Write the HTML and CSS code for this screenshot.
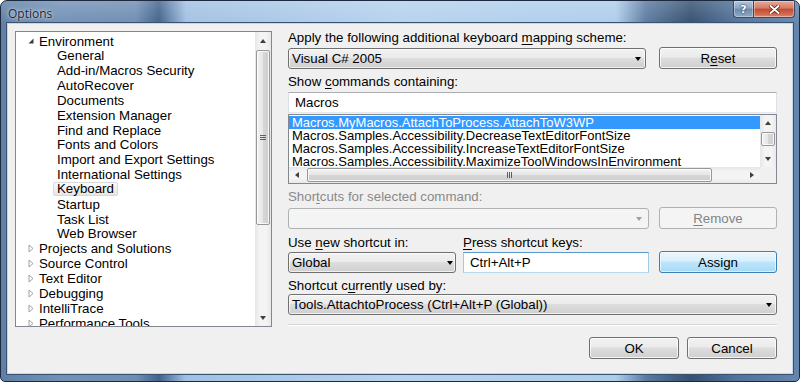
FILE: index.html
```html
<!DOCTYPE html>
<html lang="en">
<head>
    <meta charset="UTF-8">
    <meta name="viewport" content="width=device-width, initial-scale=1.0">
    <title>Options</title>
    <link rel="stylesheet" href="styles.css">
</head>
<body>
    <div class="window">
        <div class="titlebar">
            <span class="title">Options</span>
            <div class="caption">
                <span class="cap-btn help">?</span>
                <span class="cap-btn close">
                    <svg width="11" height="9" viewBox="0 0 11 9"><path d="M1.5 1 L9.5 8 M9.5 1 L1.5 8" stroke="#3a1a14" stroke-width="3.4" stroke-linecap="round"/><path d="M1.5 1 L9.5 8 M9.5 1 L1.5 8" stroke="#fff" stroke-width="2" stroke-linecap="round"/></svg>
                </span>
            </div>
        </div>

        <div class="client">
            <div class="tree">
                <div class="tree-items">
                    <div class="node root"><span class="exp"><svg width="6" height="6" viewBox="0 0 6 6"><path d="M5.5 0.5 L5.5 5.5 L0.5 5.5 Z" fill="#3c3c3c"/></svg></span>Environment</div>
                    <div class="node child">General</div>
                    <div class="node child">Add-in/Macros Security</div>
                    <div class="node child">AutoRecover</div>
                    <div class="node child">Documents</div>
                    <div class="node child">Extension Manager</div>
                    <div class="node child">Find and Replace</div>
                    <div class="node child">Fonts and Colors</div>
                    <div class="node child">Import and Export Settings</div>
                    <div class="node child">International Settings</div>
                    <div class="node child"><span class="sel">Keyboard</span></div>
                    <div class="node child">Startup</div>
                    <div class="node child">Task List</div>
                    <div class="node child">Web Browser</div>
                    <div class="node root"><span class="exp"><svg width="6" height="9" viewBox="0 0 6 9"><path d="M1 1 L5 4.5 L1 8 Z" fill="#fff" stroke="#a2a2a2"/></svg></span>Projects and Solutions</div>
                    <div class="node root"><span class="exp"><svg width="6" height="9" viewBox="0 0 6 9"><path d="M1 1 L5 4.5 L1 8 Z" fill="#fff" stroke="#a2a2a2"/></svg></span>Source Control</div>
                    <div class="node root"><span class="exp"><svg width="6" height="9" viewBox="0 0 6 9"><path d="M1 1 L5 4.5 L1 8 Z" fill="#fff" stroke="#a2a2a2"/></svg></span>Text Editor</div>
                    <div class="node root"><span class="exp"><svg width="6" height="9" viewBox="0 0 6 9"><path d="M1 1 L5 4.5 L1 8 Z" fill="#fff" stroke="#a2a2a2"/></svg></span>Debugging</div>
                    <div class="node root"><span class="exp"><svg width="6" height="9" viewBox="0 0 6 9"><path d="M1 1 L5 4.5 L1 8 Z" fill="#fff" stroke="#a2a2a2"/></svg></span>IntelliTrace</div>
                    <div class="node root"><span class="exp"><svg width="6" height="9" viewBox="0 0 6 9"><path d="M1 1 L5 4.5 L1 8 Z" fill="#fff" stroke="#a2a2a2"/></svg></span>Performance Tools</div>
                </div>
                <div class="vscroll tree-scroll">
                    <div class="sb-btn"><i class="arr up"></i></div>
                    <div class="sb-track"><div class="thumb"><i class="grip-h"></i></div></div>
                    <div class="sb-btn"><i class="arr down"></i></div>
                </div>
            </div>

            <div class="page">
                <div class="label">Apply the following additional keyboard <u>m</u>apping scheme:</div>
                <div class="row row-scheme">
                    <div class="combo"><span>Visual C# 2005</span><i class="arr drop"></i></div>
                    <div class="btn">R<u>e</u>set</div>
                </div>

                <div class="label gap">Show <u>c</u>ommands containing:</div>
                <div class="textbox search">Macros</div>

                <div class="listbox">
                    <div class="list-rows">
                        <div class="item selected">Macros.MyMacros.AttachToProcess.AttachToW3WP</div>
                        <div class="item">Macros.Samples.Accessibility.DecreaseTextEditorFontSize</div>
                        <div class="item">Macros.Samples.Accessibility.IncreaseTextEditorFontSize</div>
                        <div class="item">Macros.Samples.Accessibility.MaximizeToolWindowsInEnvironment</div>
                    </div>
                    <div class="vscroll list-scroll">
                        <div class="sb-btn"><i class="arr up"></i></div>
                        <div class="sb-track"><div class="thumb"></div></div>
                        <div class="sb-btn"><i class="arr down"></i></div>
                    </div>
                    <div class="hscroll">
                        <div class="sb-btn"><i class="arr left"></i></div>
                        <div class="sb-track"><div class="thumb"><i class="grip-v"></i></div></div>
                        <div class="sb-btn"><i class="arr right"></i></div>
                    </div>
                    <div class="corner"></div>
                </div>

                <div class="label gap disabled">Shor<u>t</u>cuts for selected command:</div>
                <div class="row row-remove">
                    <div class="combo disabled"><span></span><i class="arr drop"></i></div>
                    <div class="btn disabled"><u>R</u>emove</div>
                </div>

                <div class="grid-new">
                    <div class="label">Use <u>n</u>ew shortcut in:</div>
                    <div class="label"><u>P</u>ress shortcut keys:</div>
                    <div></div>
                    <div class="combo"><span>Global</span><i class="arr drop"></i></div>
                    <div class="textbox focused">Ctrl+Alt+P</div>
                    <div class="btn default">Assign</div>
                </div>

                <div class="label gap">Shortcut c<u>u</u>rrently used by:</div>
                <div class="combo used"><span>Tools.AttachtoProcess (Ctrl+Alt+P (Global))</span><i class="arr drop"></i></div>

                <div class="separator"></div>

                <div class="footer">
                    <div class="btn">OK</div>
                    <div class="btn">Cancel</div>
                </div>
            </div>
        </div>
    </div>
</body>
</html>
```

FILE: styles.css
```css
body {
    margin: 0;
    font-family: "Liberation Sans", Arial, sans-serif;
    font-size: 13.3px;
    color: #000;
    background: #fff;
}
u {
    text-decoration: underline;
    text-underline-offset: 2px;
}
.window {
    width: 800px;
    height: 382px;
    box-sizing: border-box;
    display: flex;
    flex-direction: column;
    border: 1px solid #1b2a3f;
    border-radius: 7px 7px 5px 5px;
    overflow: hidden;
    background:
        linear-gradient(to bottom, rgba(255, 255, 255, 0.18), rgba(255, 255, 255, 0) 24px),
        linear-gradient(90deg, #5f7fa6 0, #7291b5 60px, #6f8eb2 135px, #41628b 158px, #a2c1e2 185px, #b5d2ee 400px, #aecdeb 615px, #5b7a9f 645px, #34506f 690px, #52729a 735px, #6586ad 800px);
}
.titlebar {
    height: 23px;
    display: flex;
    align-items: flex-start;
    padding-left: 7px;
}
.title {
    margin-top: 5px;
    font-family: "Open Sans", "Noto Sans", sans-serif;
    font-size: 12px;
    line-height: 15px;
    color: #1c2430;
    text-shadow: 0 0 6px rgba(235, 244, 255, 0.9), 0 0 2px rgba(235, 244, 255, 0.8);
}
.caption {
    margin-left: auto;
    margin-right: 4px;
    display: flex;
}
.cap-btn {
    height: 17px;
    box-sizing: border-box;
    display: flex;
    align-items: center;
    justify-content: center;
    border: 1px solid #3a4c63;
    border-top: none;
    box-shadow: inset 0 0 0 1px rgba(255, 255, 255, 0.35);
}
.help {
    width: 20px;
    border-radius: 0 0 0 4px;
    border-right: none;
    background: linear-gradient(#b3c5da, #8ea6c3 45%, #7089ab 50%, #8fa9c8);
    font-family: "DejaVu Sans", sans-serif;
    font-weight: bold;
    font-size: 11px;
    color: #fff;
    text-shadow: 0 0 2px #2a3a50, 0 0 1px #2a3a50;
}
.close {
    width: 42px;
    border-radius: 0 0 4px 0;
    background: linear-gradient(#e8a898, #d57a64 45%, #c24a31 50%, #d36d53 85%, #e0907a);
}
.client {
    height: 349px;
    margin: 0 7px;
    box-sizing: border-box;
    display: flex;
    padding: 7px 15px 0 7px;
    background: #f0f0f0;
    box-shadow: 0 0 0 1px #c8d5e4, 0 0 0 2px #3b5372;
}

/* tree */
.tree {
    width: 257px;
    height: 296px;
    box-sizing: border-box;
    border: 1px solid #828790;
    background: #fff;
    display: flex;
    flex-shrink: 0;
}
.tree-items {
    flex: 1;
    padding-top: 1.6px;
    overflow: hidden;
}
.node {
    height: 14.85px;
    display: flex;
    align-items: center;
    white-space: nowrap;
}
.node.root {
    padding-left: 10px;
}
.node.child {
    padding-left: 41px;
}
.exp {
    width: 13px;
    display: flex;
    align-items: center;
    padding-left: 2px;
    box-sizing: border-box;
}
.sel {
    margin-left: -4px;
    padding: 0 3px;
    line-height: 12px;
    border: 1px solid #d9d9d9;
    border-radius: 2px;
    background: linear-gradient(#fbfbfb, #e6e6e6);
}

/* scrollbars */
.vscroll {
    width: 16px;
    display: flex;
    flex-direction: column;
    background: linear-gradient(90deg, #e6e6e6, #f4f4f4 30%, #f4f4f4 70%, #e9e9e9);
}
.hscroll {
    height: 16px;
    display: flex;
    background: linear-gradient(#e6e6e6, #f4f4f4 30%, #f4f4f4 70%, #e9e9e9);
}
.sb-btn {
    flex: 0 0 17px;
    display: flex;
    align-items: center;
    justify-content: center;
}
.list-scroll .sb-btn,
.hscroll .sb-btn {
    flex-basis: 16px;
}
.sb-track {
    flex: 1;
    display: flex;
}
.vscroll .sb-track {
    flex-direction: column;
}
.thumb {
    box-sizing: border-box;
    border: 1px solid #979797;
    border-radius: 2px;
    display: flex;
    align-items: center;
    justify-content: center;
    box-shadow: inset 0 0 0 1px rgba(255, 255, 255, 0.8);
}
.vscroll .thumb {
    margin: 1px 1px 0;
    background: linear-gradient(90deg, #f2f2f2, #e6e6e6 50%, #d6d6d6 51%, #cfcfcf);
}
.tree-scroll .thumb {
    height: 175px;
}
.list-scroll .thumb {
    height: 14px;
}
.hscroll .thumb {
    width: 405px;
    margin: 1px 0 1px 2px;
    background: linear-gradient(#f2f2f2, #e6e6e6 50%, #d6d6d6 51%, #cfcfcf);
}
.grip-h {
    width: 6px;
    height: 5px;
    background: repeating-linear-gradient(#5f5f5f 0 1px, transparent 1px 2px);
}
.grip-v {
    width: 5px;
    height: 6px;
    background: repeating-linear-gradient(90deg, #5f5f5f 0 1px, transparent 1px 2px);
}
.arr {
    width: 0;
    height: 0;
    border-style: solid;
}
.arr.up {
    border-width: 0 3.5px 4px;
    border-color: transparent transparent #404040;
}
.arr.down {
    border-width: 4px 3.5px 0;
    border-color: #404040 transparent transparent;
}
.arr.left {
    border-width: 3.5px 4px 3.5px 0;
    border-color: transparent #404040 transparent transparent;
}
.arr.right {
    border-width: 3.5px 0 3.5px 4px;
    border-color: transparent transparent transparent #404040;
}
.arr.drop {
    border-width: 4px 3.5px 0;
    border-color: #000 transparent transparent;
}

/* right page */
.page {
    width: 489px;
    margin-left: 16px;
    display: flex;
    flex-direction: column;
}
.label {
    line-height: 14px;
    white-space: nowrap;
}
.label.gap {
    margin-top: 6px;
}
.label.disabled {
    color: #8a8a8a;
}
.row {
    display: flex;
    justify-content: space-between;
    align-items: flex-start;
    margin-top: 2px;
}
.row-scheme .combo {
    width: 358px;
    margin-top: 1px;
}
.row-remove {
    margin-top: 3px;
}
.row-remove .combo {
    width: 361px;
    margin-top: 1px;
}
.btn {
    width: 118px;
    height: 22px;
    box-sizing: border-box;
    border: 1px solid #707070;
    border-radius: 3px;
    display: flex;
    align-items: center;
    justify-content: center;
    background: linear-gradient(#f2f2f2, #ebebeb 45%, #dddddd 50%, #cfcfcf);
    box-shadow: inset 0 0 0 1px rgba(255, 255, 255, 0.75);
}
.btn.default {
    border-color: #3c7fb1;
    background: linear-gradient(#eaf6fd, #d9f0fc 45%, #bee6fd 50%, #a7d9f5);
    box-shadow: inset 0 0 0 1px rgba(255, 255, 255, 0.6);
}
.btn.disabled {
    border-color: #adb2b5;
    background: #f4f4f4;
    color: #838383;
    box-shadow: none;
}
.combo {
    height: 21px;
    box-sizing: border-box;
    border: 1px solid #707070;
    border-radius: 3px;
    display: flex;
    align-items: center;
    padding: 0 4px 0 3px;
    background: linear-gradient(#f2f2f2, #ebebeb 45%, #dddddd 50%, #cfcfcf);
    box-shadow: inset 0 0 0 1px rgba(255, 255, 255, 0.7);
    white-space: nowrap;
}
.combo span {
    flex: 1;
}
.combo.disabled {
    border-color: #adb2b5;
    background: #f4f4f4;
    box-shadow: none;
    padding-right: 6px;
}
.combo.disabled .arr.drop {
    border-top-color: #a0a0a0;
}
.textbox {
    height: 21px;
    box-sizing: border-box;
    border: 1px solid #dbdfe6;
    border-top-color: #abadb3;
    border-bottom-color: #e3e9ef;
    background: #fff;
    padding-left: 6px;
    line-height: 19px;
}
.textbox.search {
    margin-top: 3px;
}
.textbox.focused {
    border-color: #a4c9e3;
    border-top-color: #5a9ad0;
    border-bottom-color: #b7d9ed;
}

/* command list */
.listbox {
    height: 70px;
    margin-top: 1px;
    box-sizing: border-box;
    border: 1px solid #828790;
    background: #fff;
    display: grid;
    grid-template-columns: 1fr 16px;
    grid-template-rows: 1fr 16px;
}
.list-rows {
    padding-top: 1px;
    overflow: hidden;
}
.item {
    height: 13px;
    line-height: 13px;
    padding-left: 3px;
    font-size: 13px;
    white-space: nowrap;
}
.item.selected {
    background: #3399ff;
    color: #fff;
}
.corner {
    background: #f0f0f0;
}

.grid-new {
    display: grid;
    grid-template-columns: 168px 186px 118px;
    column-gap: 7px;
    margin-top: 7px;
}
.grid-new > :nth-child(3) {
    margin-left: 3px;
}
.grid-new > :nth-child(n+4) {
    margin-top: 2px;
}
.grid-new .btn {
    margin-top: 1px;
    margin-left: 3px;
}
.grid-new .combo {
    padding-right: 2px;
}
.combo.used {
    margin-top: 1px;
    padding-right: 4px;
}
.separator {
    margin-top: 9px;
    border-top: 1px solid #d5d5d5;
    border-bottom: 1px solid #fff;
}
.footer {
    display: flex;
    justify-content: flex-end;
    gap: 8px;
    margin-top: 11px;
}
.footer .btn {
    width: 90px;
}
```
